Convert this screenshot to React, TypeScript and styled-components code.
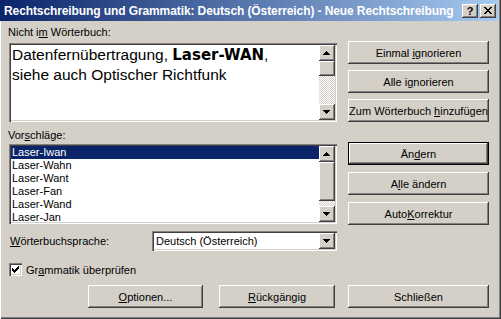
import React from "react";
import styled, { createGlobalStyle, css } from "styled-components";

const Global = createGlobalStyle`
  html, body { margin: 0; padding: 0; background: #d4d0c8; }
  body { font-family: "Liberation Sans", Arial, sans-serif; font-size: 11px; color: #000; }
  * { box-sizing: border-box; }
`;

const raised = css`
  background: #d4d0c8;
  box-shadow: inset -1px -1px #404040, inset 1px 1px #ffffff, inset -2px -2px #808080, inset 2px 2px #d4d0c8;
`;

const sunken = css`
  box-shadow: inset 1px 1px #808080, inset 2px 2px #404040, inset -1px -1px #ffffff, inset -2px -2px #d4d0c8;
`;

const Window = styled.div`
  width: 501px;
  height: 319px;
  background: #d4d0c8;
  box-shadow: inset -1px -1px #404040, inset -2px -2px #808080;
  display: flex;
  flex-direction: column;
  overflow: hidden;
`;

const TitleBar = styled.div`
  height: 21px;
  margin-right: 3px;
  display: flex;
  align-items: center;
  padding: 0 2px 0 4px;
  background: linear-gradient(to right, #0a246a, #a6caf0);
`;

const Title = styled.div`
  flex: 1;
  color: #fff;
  font-weight: bold;
  font-size: 12px;
  letter-spacing: -0.1px;
  white-space: nowrap;
`;

const CaptionButton = styled.div`
  ${raised};
  width: 16px;
  height: 14px;
  margin-left: 2px;
  display: flex;
  align-items: center;
  justify-content: center;
  font-weight: bold;
  font-size: 11px;
  line-height: 14px;
`;

const Body = styled.div`
  padding-left: 9px;
  display: flex;
  flex-direction: column;
  box-shadow: inset 1px 0 #ffffff;
  flex: 1;
`;

const Section = styled.div`
  display: flex;
`;

const LeftCol = styled.div<{ $top: number }>`
  width: 328px;
  padding-top: ${(p) => p.$top}px;
  display: flex;
  flex-direction: column;
`;

const RightCol = styled.div`
  width: 141px;
  margin-left: 11px;
  padding-top: 20px;
  display: flex;
  flex-direction: column;
`;

const Label = styled.div<{ $gap: number }>`
  line-height: 13px;
  height: 13px;
  margin-left: -1px;
  margin-bottom: ${(p) => p.$gap}px;
  white-space: nowrap;
`;

const Field = styled.div<{ $h: number }>`
  ${sunken};
  background: #fff;
  height: ${(p) => p.$h}px;
  padding: 2px;
  display: flex;
  overflow: hidden;
`;

const WordText = styled.div`
  flex: 1;
  font-size: 15.5px;
  line-height: 20px;
  padding-left: 1px;
  white-space: nowrap;
  overflow: hidden;
`;

const Bold = styled.span`
  font-family: "DejaVu Sans", Verdana, sans-serif;
  font-weight: bold;
  font-size: 15px;
`;

const ListBody = styled.div`
  flex: 1;
  overflow: hidden;
  display: flex;
  flex-direction: column;
`;

const ListItem = styled.div<{ $selected?: boolean }>`
  height: 13px;
  line-height: 13px;
  flex: none;
  padding-left: 1px;
  white-space: nowrap;
  background: ${(p) => (p.$selected ? "#0a246a" : "transparent")};
  color: ${(p) => (p.$selected ? "#fff" : "#000")};
`;

const ScrollBar = styled.div`
  width: 16px;
  display: flex;
  flex-direction: column;
`;

const ScrollButton = styled.div`
  ${raised};
  width: 16px;
  height: 16px;
  flex: none;
  display: flex;
`;

const Thumb = styled.div<{ $h: number }>`
  ${raised};
  height: ${(p) => p.$h}px;
  flex: none;
`;

const Track = styled.div`
  flex: 1;
  background: repeating-conic-gradient(#d4d0c8 0 25%, #ffffff 0 50%) 0 0 / 2px 2px;
`;

const Button = styled.div<{ $default?: boolean; $w?: number }>`
  ${raised};
  height: 23px;
  width: ${(p) => (p.$w ? `${p.$w}px` : "100%")};
  display: flex;
  align-items: center;
  justify-content: center;
  white-space: nowrap;
  flex: none;
  ${(p) =>
    p.$default &&
    css`
      box-shadow: inset 0 0 0 1px #000, inset -2px -2px #404040, inset 2px 2px #ffffff,
        inset -3px -3px #808080;
    `}
`;

const ButtonStack = styled.div<{ $gap: number }>`
  display: flex;
  flex-direction: column;
  gap: ${(p) => p.$gap}px;
`;

const LangRow = styled.div`
  margin-top: 6px;
  height: 20px;
  display: flex;
  align-items: center;
  width: 328px;
`;

const LangLabel = styled.div`
  width: 143px;
  padding-left: 1px;
  white-space: nowrap;
`;

const Combo = styled.div`
  ${sunken};
  background: #fff;
  flex: 1;
  height: 20px;
  padding: 2px;
  display: flex;
  align-items: center;
`;

const ComboText = styled.div`
  flex: 1;
  padding-left: 2px;
  white-space: nowrap;
`;

const CheckRow = styled.div`
  margin-top: 12px;
  display: flex;
  align-items: center;
  height: 13px;
`;

const CheckBox = styled.div`
  ${sunken};
  background: #fff;
  width: 13px;
  height: 13px;
  flex: none;
  display: flex;
  align-items: center;
  justify-content: center;
`;

const CheckLabel = styled.div`
  margin-left: 4px;
  white-space: nowrap;
`;

const Footer = styled.div`
  margin-top: 9px;
  display: flex;
`;

const FooterLeft = styled.div`
  width: 328px;
  display: flex;
  justify-content: flex-end;
  gap: 16px;
  padding-right: 2px;
`;

const FooterRight = styled.div`
  width: 141px;
  margin-left: 11px;
`;

const Arrow = ({ down }: { down?: boolean }) => (
  <svg width="16" height="16" viewBox="0 0 16 16" shapeRendering="crispEdges">
    {down ? (
      <g fill="#000">
        <rect x="4" y="6" width="7" height="1" />
        <rect x="5" y="7" width="5" height="1" />
        <rect x="6" y="8" width="3" height="1" />
        <rect x="7" y="9" width="1" height="1" />
      </g>
    ) : (
      <g fill="#000">
        <rect x="7" y="6" width="1" height="1" />
        <rect x="6" y="7" width="3" height="1" />
        <rect x="5" y="8" width="5" height="1" />
        <rect x="4" y="9" width="7" height="1" />
      </g>
    )}
  </svg>
);

const CloseIcon = () => (
  <svg width="8" height="7" viewBox="0 0 8 7" shapeRendering="crispEdges">
    <g fill="#000">
      {[0, 1, 2, 3, 4, 5, 6].map((i) => (
        <React.Fragment key={i}>
          <rect x={i} y={i} width="2" height="1" />
          <rect x={6 - i} y={i} width="2" height="1" />
        </React.Fragment>
      ))}
    </g>
  </svg>
);

const CheckMark = () => (
  <svg width="7" height="7" viewBox="0 0 7 7" shapeRendering="crispEdges">
    <g fill="#000">
      <rect x="0" y="2" width="1" height="3" />
      <rect x="1" y="3" width="1" height="3" />
      <rect x="2" y="4" width="1" height="3" />
      <rect x="3" y="3" width="1" height="3" />
      <rect x="4" y="2" width="1" height="3" />
      <rect x="5" y="1" width="1" height="3" />
      <rect x="6" y="0" width="1" height="3" />
    </g>
  </svg>
);

const VScroll = ({ thumb }: { thumb: number }) => (
  <ScrollBar>
    <ScrollButton>
      <Arrow />
    </ScrollButton>
    <Thumb $h={thumb} />
    <Track />
    <ScrollButton>
      <Arrow down />
    </ScrollButton>
  </ScrollBar>
);

const suggestions = ["Laser-Iwan", "Laser-Wahn", "Laser-Want", "Laser-Fan", "Laser-Wand", "Laser-Jan"];

export default function App() {
  return (
    <>
      <Global />
      <Window>
        <TitleBar>
          <Title>Rechtschreibung und Grammatik: Deutsch (Österreich) - Neue Rechtschreibung</Title>
          <CaptionButton>?</CaptionButton>
          <CaptionButton>
            <CloseIcon />
          </CaptionButton>
        </TitleBar>
        <Body>
          <Section>
            <LeftCol $top={5}>
              <Label $gap={4}>
                Nicht i<u>m</u> Wörterbuch:
              </Label>
              <Field $h={79}>
                <WordText>
                  Datenfernübertragung, <Bold>Laser-WAN</Bold>,
                  <br />
                  siehe auch Optischer Richtfunk
                </WordText>
                <VScroll thumb={15} />
              </Field>
            </LeftCol>
            <RightCol>
              <ButtonStack $gap={6}>
                <Button>
                  Einmal&nbsp;<u>i</u>gnorieren
                </Button>
                <Button>
                  Alle i<u>g</u>norieren
                </Button>
                <Button>
                  Zum Wörterbuch&nbsp;<u>h</u>inzufügen
                </Button>
              </ButtonStack>
            </RightCol>
          </Section>
          <Section>
            <LeftCol $top={7}>
              <Label $gap={2}>
                Vor<u>s</u>chläge:
              </Label>
              <Field $h={80}>
                <ListBody>
                  {suggestions.map((s, i) => (
                    <ListItem key={s} $selected={i === 0}>
                      {s}
                    </ListItem>
                  ))}
                </ListBody>
                <VScroll thumb={39} />
              </Field>
            </LeftCol>
            <RightCol>
              <ButtonStack $gap={7}>
                <Button $default>
                  Än<u>d</u>ern
                </Button>
                <Button>
                  A<u>l</u>le ändern
                </Button>
                <Button>
                  Auto<u>K</u>orrektur
                </Button>
              </ButtonStack>
            </RightCol>
          </Section>
          <LangRow>
            <LangLabel>
              <u>W</u>örterbuchsprache:
            </LangLabel>
            <Combo>
              <ComboText>Deutsch (Österreich)</ComboText>
              <ScrollButton>
                <Arrow down />
              </ScrollButton>
            </Combo>
          </LangRow>
          <CheckRow>
            <CheckBox>
              <CheckMark />
            </CheckBox>
            <CheckLabel>
              Gr<u>a</u>mmatik überprüfen
            </CheckLabel>
          </CheckRow>
          <Footer>
            <FooterLeft>
              <Button $w={115}>
                <u>O</u>ptionen...
              </Button>
              <Button $w={116}>
                <u>R</u>ückgängig
              </Button>
            </FooterLeft>
            <FooterRight>
              <Button>Schließen</Button>
            </FooterRight>
          </Footer>
        </Body>
      </Window>
    </>
  );
}
